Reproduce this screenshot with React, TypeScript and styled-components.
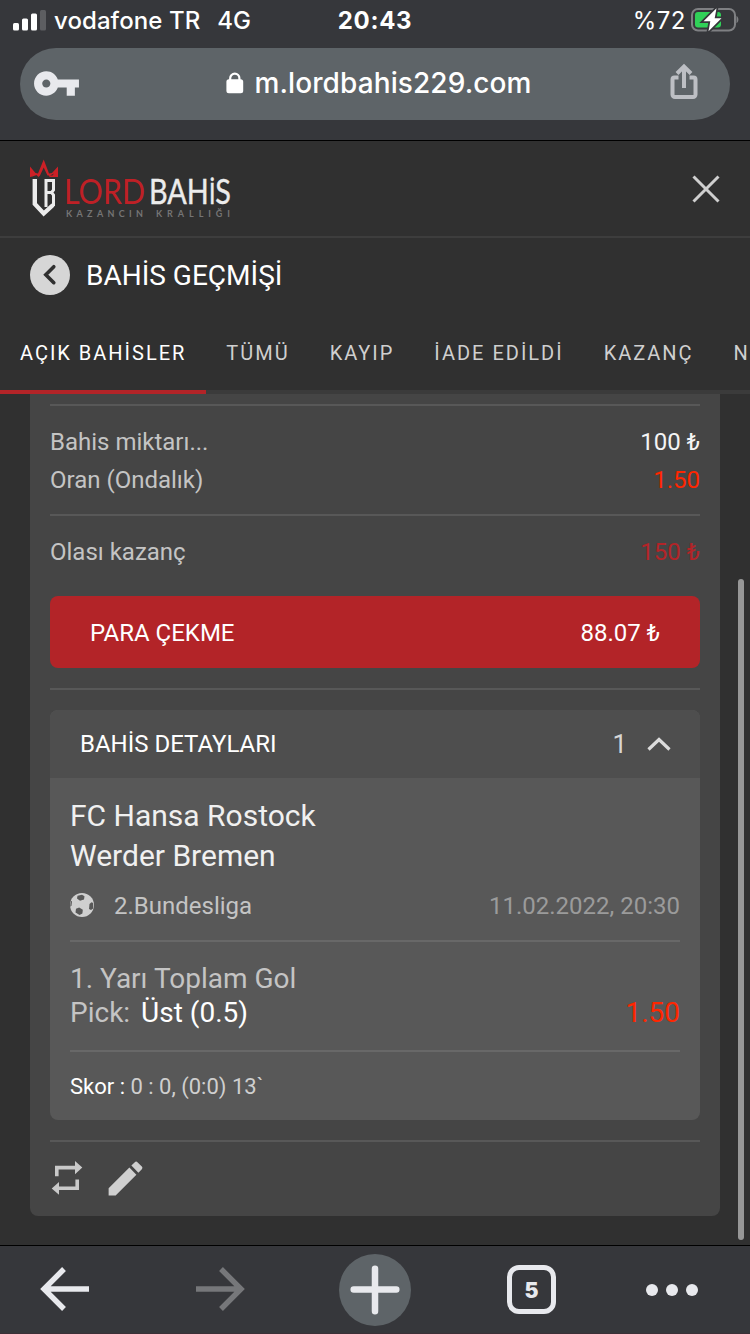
import React from "react";
import styled, { createGlobalStyle, css } from "styled-components";

const Global = createGlobalStyle`
  * { box-sizing: border-box; }
  body { margin: 0; background: #303030; font-family: Roboto, sans-serif; }
  svg { display: block; flex: none; }
`;

const Screen = styled.div`
  position: relative;
  width: 750px;
  height: 1334px;
  overflow: hidden;
  display: flex;
  flex-direction: column;
  background: #303030;
  color: #fff;
  white-space: nowrap;
`;

/* Browser chrome */
const Chrome = styled.header`
  height: 141px;
  flex: none;
  background: #36373b;
  border-bottom: 1px solid #000;
`;
const StatusBar = styled.div`
  height: 48px;
  padding: 0 11px 7px 13px;
  display: grid;
  grid-template-columns: 1fr auto 1fr;
  align-items: center;
  font: 500 24px/41px Inter, sans-serif;
`;
const Carrier = styled.div`
  display: flex;
  align-items: center;
`;
const CarrierName = styled.span`
  margin-left: 7px;
  letter-spacing: 0.08px;
`;
const Network = styled.span`
  margin-left: 17px;
`;
const Clock = styled.span`
  margin-right: 2px;
  font-weight: 700;
  letter-spacing: 0.7px;
`;
const Power = styled.div`
  display: flex;
  align-items: center;
  justify-content: flex-end;
  gap: 5px;
  font-weight: 400;
  letter-spacing: 0.5px;
`;
const AddressBar = styled.div`
  height: 72px;
  margin: 0 20px;
  padding: 0 30px 2px 12px;
  border-radius: 36px;
  background: #5e6468;
  display: grid;
  grid-template-columns: 49px 1fr 31px;
  align-items: center;
`;
const Address = styled.div`
  display: flex;
  align-items: center;
  justify-content: center;
  gap: 10px;
  padding-left: 8px;
  font: 500 28px/40px Inter, sans-serif;
  letter-spacing: 0.1px;
`;

/* Site header */
const SiteHeader = styled.div`
  height: 97px;
  flex: none;
  padding: 0 30px 0 30px;
  display: flex;
  align-items: center;
  justify-content: space-between;
  border-bottom: 2px solid #3d3d3d;
`;
const TitleRow = styled.div`
  height: 74px;
  flex: none;
  padding: 0 30px;
  display: flex;
  align-items: center;
  gap: 16px;
`;
const Title = styled.h1`
  margin: 0;
  padding-top: 2px;
  font: 400 28px/40px Roboto, sans-serif;
`;
const BackButton = styled.button`
  width: 40px;
  height: 40px;
  padding: 0;
  border: 0;
  border-radius: 50%;
  background: #d6d6d6;
`;
const Tabs = styled.nav`
  height: 82px;
  flex: none;
  display: flex;
  background: linear-gradient(#3b3b3b, #3b3b3b) bottom / 100% 4px no-repeat;
`;
const Tab = styled.div<{ $active?: boolean }>`
  flex: none;
  padding: 4px 20px 0;
  font-size: 20px;
  line-height: 74px;
  letter-spacing: 1.99px;
  color: ${(p) => (p.$active ? "#fff" : "#cfcfcf")};
  border-bottom: 4px solid ${(p) => (p.$active ? "#b32428" : "transparent")};
`;

/* Bet card */
const Content = styled.main`
  flex: 1;
  min-height: 0;
  padding: 0 30px;
`;
const Card = styled.section`
  height: 822px;
  padding: 10px 20px 0;
  border-radius: 0 0 8px 8px;
  background: #454545;
`;
const Rule = styled.div<{ $light?: boolean }>`
  height: 2px;
  background: ${(p) => (p.$light ? "#686868" : "#585858")};
`;
const Figures = styled.div<{ $bottom: number }>`
  padding: 17px 0 ${(p) => p.$bottom}px;
`;
const Row = styled.div`
  height: 38px;
  display: flex;
  align-items: center;
  justify-content: space-between;
  font-size: 24px;
  color: #c4c4c4;
`;
type Tone = "white" | "bright" | "dark";
const tones: Record<Tone, string> = { white: "#f4f4f4", bright: "#ff2600", dark: "#b32428" };
const Value = styled.span<{ $tone: Tone }>`
  color: ${(p) => tones[p.$tone]};
`;
const CashOut = styled.button`
  width: 100%;
  height: 72px;
  margin-bottom: 20px;
  padding: 1px 40px 0;
  border: 0;
  border-radius: 8px;
  background: #b32428;
  color: #fff;
  display: flex;
  align-items: center;
  justify-content: space-between;
  font: 400 24px Roboto, sans-serif;
`;
const Details = styled.div`
  margin: 20px 0;
  border-radius: 8px;
  overflow: hidden;
  background: #585858;
`;
const DetailsHead = styled.div`
  height: 68px;
  padding: 0 29px 0 30px;
  display: flex;
  align-items: center;
  justify-content: space-between;
  background: #4e4e4e;
  font-size: 24px;
`;
const Count = styled.div`
  display: flex;
  align-items: center;
  gap: 20px;
  font-size: 26px;
  color: #d6d6d6;
`;
const DetailsBody = styled.div`
  padding: 0 20px;
`;
const Teams = styled.div`
  padding-top: 18px;
  font-size: 30px;
  line-height: 40px;
  color: #f0f0f0;
`;
const League = styled.div`
  height: 64px;
  padding-bottom: 6px;
  display: flex;
  align-items: center;
  font-size: 24px;
  line-height: 30px;
  color: #c4c4c4;
`;
const LeagueName = styled.span`
  margin-left: 20px;
  padding-top: 1px;
  flex: 1;
`;
const Kickoff = styled.span`
  padding-top: 1px;
  color: #9b9b9b;
`;
const Market = styled.div`
  height: 108px;
  padding-top: 20px;
  font-size: 28px;
  line-height: 34px;
  color: #c4c4c4;
`;
const Pick = styled.div`
  display: flex;
  gap: 11px;
`;
const PickName = styled.span`
  flex: 1;
  color: #fff;
`;
const Score = styled.div`
  height: 68px;
  padding-top: 1px;
  font-size: 22px;
  line-height: 68px;
  color: #cfcfcf;
`;
const ScoreLabel = styled.span`
  color: #fff;
`;
const Actions = styled.div`
  height: 72px;
  display: flex;
  align-items: center;
  gap: 18.5px;
`;
const Scrollbar = styled.div`
  position: absolute;
  left: 738px;
  top: 579px;
  width: 6px;
  height: 661px;
  border-radius: 3px;
  background: #979797;
`;

/* Browser toolbar */
const Toolbar = styled.footer`
  height: 89px;
  flex: none;
  display: grid;
  grid-template-columns: 129px 183px 126px 187px 94px;
  align-items: center;
  justify-items: center;
  background: #36373b;
  border-top: 1px solid #000;
  border-bottom: 1px solid #3b2f36;
`;
const toolItem = css`
  display: flex;
  align-items: center;
  justify-content: center;
`;
const NewTab = styled.div`
  ${toolItem}
  width: 72px;
  height: 72px;
  margin-top: 1px;
  border-radius: 50%;
  background: #5e6468;
`;
const TabCount = styled.div`
  ${toolItem}
  width: 49px;
  height: 49px;
  padding-top: 3px;
  border: 5px solid #e8e9ed;
  border-radius: 12px;
  color: #e8e9ed;
  font: 900 21px/24px Inter, sans-serif;
`;

const SignalIcon = () => (
  <svg width="34" height="22" viewBox="0 0 34 22">
    <rect x="0" y="13" width="6" height="7.500" rx="1.5" fill="#fff" />
    <rect x="9" y="8.500" width="6" height="12" rx="1.5" fill="#fff" />
    <rect x="18" y="3.500" width="6" height="17" rx="1.5" fill="#fff" />
    <rect x="27" y="0" width="6" height="20.500" rx="1.5" fill="#5d5e61" />
  </svg>
);
const BatteryIcon = () => (
  <svg width="48" height="26" viewBox="0 0 48 26">
    <rect x="1" y="1" width="43" height="21.500" rx="6" fill="none" stroke="#7f8083" strokeWidth="2" />
    <path d="M45.500 8c2.500 1.200 2.500 6 0 7.200z" fill="#7f8083" />
    <rect x="4" y="4" width="26" height="15.500" rx="3" fill="#30d158" />
    <path d="M25.500 0.300L12.500 13.200h6.800L17.500 23.200 30.500 10.200h-6.800z" fill="#fff" stroke="#36373b" strokeWidth="3.500" paintOrder="stroke" />
  </svg>
);
const KeyIcon = () => (
  <svg width="49" height="49" viewBox="0 0 24 24" fill="#e8e9ed">
    <path d="M12.650 10C11.830 7.670 9.610 6 7 6c-3.310 0-6 2.690-6 6s2.690 6 6 6c2.610 0 4.830-1.670 5.650-4H17v4h4v-4h2v-4H12.650zM7 14c-1.100 0-2-.9-2-2s.9-2 2-2 2 .9 2 2-.9 2-2 2z" />
  </svg>
);
const LockIcon = () => (
  <svg width="18" height="22" viewBox="0 0 18 22">
    <path d="M4.200 9V6.300a4.600 4.600 0 0 1 9.200 0V9" fill="none" stroke="#fff" strokeWidth="2.200" />
    <rect x="0.400" y="7.200" width="16.800" height="14" rx="2.500" fill="#fff" />
  </svg>
);
const ShareIcon = () => (
  <svg width="31" height="40" viewBox="0 0 31 40" fill="none" stroke="#bdbfc4" strokeWidth="4">
    <path d="M9.500 14.500H5.500a2 2 0 0 0-2 2V31.500a2.500 2.500 0 0 0 2.500 2.500H24a2.500 2.500 0 0 0 2.500-2.500V16.500a2 2 0 0 0-2-2h-4" />
    <path d="M15 25V4M8 10.500l7-7 7 7" />
  </svg>
);
const Logo = () => (
  <svg width="202" height="62" viewBox="0 0 202 62">
    <path d="M0 8.500l5.500 6.500 2.500.5L13.700 1.500l5.300 14 3-.5L28 8.500V19h-8.500l-.5-1.500h3.500l1.500-2-4 2h-2.500L13.700 9.500 10 17.500l-1.500 1.500-2-2-4 1.500L0 19z" fill="#cd2026" />
    <g fill="none" stroke="#ececec">
      <path d="M4.800 21V46L13.700 55.500 23 47" strokeWidth="4.400" />
      <path d="M16 49V22.500H23.500V32l-2 2.500 2 2.500V48M16 34.500h6" strokeWidth="3" />
    </g>
    <g fontFamily="Lato, sans-serif" fontSize="35">
      <text x="34" y="46" fill="#bf2026" textLength="81" lengthAdjust="spacingAndGlyphs">LORD</text>
      <text x="119" y="46" fill="#ececec" stroke="#ececec" strokeWidth="0.400" textLength="82" lengthAdjust="spacingAndGlyphs">
        BAH<tspan fontSize="28">İ</tspan>S
      </text>
    </g>
    <g fontFamily="Lato, sans-serif" fontSize="9" fontWeight="700" fill="#757575">
      <text x="36" y="58.500" textLength="77">KAZANCIN</text>
      <text x="126" y="58.500" textLength="74">KRALLIĞI</text>
    </g>
  </svg>
);
const CloseIcon = () => (
  <svg width="28" height="28" viewBox="0 0 28 28" stroke="#cfcfcf" strokeWidth="3">
    <path d="M1.500 1.500l25 25M26.500 1.500l-25 25" />
  </svg>
);
const BackIcon = () => (
  <svg width="40" height="40" viewBox="0 0 40 40" fill="none" stroke="#303030" strokeWidth="3.600" strokeLinecap="round">
    <path d="M23.800 11.700L15.800 19.700l8 8" />
  </svg>
);
const ChevronUp = () => (
  <svg width="24" height="14" viewBox="0 0 24 14" fill="none" stroke="#dcdcdc" strokeWidth="3.200">
    <path d="M1.500 12.500L12 2.500l10.500 10" />
  </svg>
);
const BallIcon = () => (
  <svg width="24" height="24" viewBox="0 0 24 24">
    <clipPath id="ball"><circle cx="12" cy="12" r="12" /></clipPath>
    <circle cx="12" cy="12" r="12" fill="#cfcfcf" />
    <g fill="#585858" clipPath="url(#ball)">
      <path d="M7.500 2.800l4.500-1 2.500 1.500-.5 3.200-4 1.200-3-2.200z" />
      <path d="M6 15.800l3.200-1.200 3.600 2.200-.4 3.700L9.500 22l-4-2.500z" />
      <path d="M19.500 11l2-1.700 1.700.7v5.500l-2.200 1.500-2-1z" />
      <path d="M.6 7.500l1.400 1-.5 4L.2 14z" />
    </g>
  </svg>
);
const RepeatIcon = () => (
  <svg width="34" height="34" viewBox="0 0 34 34" fill="#c9c9c9">
    <path d="M5 4.800H25V0l7.300 6.600L25 13.200V8.400H8.600V15.200H5z" />
    <path d="M29 18.500V29H9v4.800L1.700 27.400 9 21v4.400h16.400V18.500z" />
  </svg>
);
const EditIcon = () => (
  <svg width="45" height="45" viewBox="0 0 24 24" fill="#cfcfcf">
    <path d="M3 17.250V21h3.750L17.810 9.940l-3.750-3.750L3 17.250zM20.710 7.040c.39-.39.39-1.020 0-1.410l-2.340-2.340c-.39-.39-1.020-.39-1.410 0l-1.830 1.830 3.750 3.750 1.830-1.830z" />
  </svg>
);
const ArrowIcon = ({ forward = false }: { forward?: boolean }) => (
  <svg width="49" height="47" viewBox="0 0 49 47" fill="none" stroke={forward ? "#76777a" : "#e8e9ed"} strokeWidth="5.400">
    <path d={forward ? "M0 23H45M25 3L45 23 25 43" : "M49 23H4M24 3L4 23 24 43"} />
  </svg>
);
const PlusIcon = () => (
  <svg width="50" height="50" viewBox="0 0 50 50" stroke="#e8e9ed" strokeWidth="6.500" strokeLinecap="round">
    <path d="M25 3.700V46.300M3.700 24.500H46.300" />
  </svg>
);
const MoreIcon = () => (
  <svg width="52" height="12" viewBox="0 0 52 12" fill="#e8e9ed">
    <circle cx="6" cy="6" r="6" />
    <circle cx="26" cy="6" r="6" />
    <circle cx="46" cy="6" r="6" />
  </svg>
);

const tabs = ["AÇIK BAHİSLER", "TÜMÜ", "KAYIP", "İADE EDİLDİ", "KAZANÇ", "N"];

export default function App() {
  return (
    <>
      <Global />
      <Screen>
        <Chrome>
          <StatusBar>
            <Carrier>
              <SignalIcon />
              <CarrierName>vodafone TR</CarrierName>
              <Network>4G</Network>
            </Carrier>
            <Clock>20:43</Clock>
            <Power>
              <span>%72</span>
              <BatteryIcon />
            </Power>
          </StatusBar>
          <AddressBar>
            <KeyIcon />
            <Address>
              <LockIcon />
              <span>m.lordbahis229.com</span>
            </Address>
            <ShareIcon />
          </AddressBar>
        </Chrome>

        <SiteHeader>
          <Logo />
          <CloseIcon />
        </SiteHeader>
        <TitleRow>
          <BackButton><BackIcon /></BackButton>
          <Title>BAHİS GEÇMİŞİ</Title>
        </TitleRow>
        <Tabs>
          {tabs.map((name, i) => (
            <Tab key={name} $active={i === 0}>{name}</Tab>
          ))}
        </Tabs>

        <Content>
          <Card>
            <Rule />
            <Figures $bottom={15}>
              <Row><span>Bahis miktarı...</span><Value $tone="white">100 ₺</Value></Row>
              <Row><span>Oran (Ondalık)</span><Value $tone="bright">1.50</Value></Row>
            </Figures>
            <Rule />
            <Figures $bottom={25}>
              <Row><span>Olası kazanç</span><Value $tone="dark">150 ₺</Value></Row>
            </Figures>
            <CashOut><span>PARA ÇEKME</span><span>88.07 ₺</span></CashOut>
            <Rule />
            <Details>
              <DetailsHead>
                <span>BAHİS DETAYLARI</span>
                <Count>1<ChevronUp /></Count>
              </DetailsHead>
              <DetailsBody>
                <Teams>
                  <div>FC Hansa Rostock</div>
                  <div>Werder Bremen</div>
                </Teams>
                <League>
                  <BallIcon />
                  <LeagueName>2.Bundesliga</LeagueName>
                  <Kickoff>11.02.2022, 20:30</Kickoff>
                </League>
                <Rule $light />
                <Market>
                  <div>1. Yarı Toplam Gol</div>
                  <Pick>
                    <span>Pick:</span>
                    <PickName>Üst (0.5)</PickName>
                    <Value $tone="bright">1.50</Value>
                  </Pick>
                </Market>
                <Rule $light />
                <Score><ScoreLabel>Skor : </ScoreLabel>0 : 0, (0:0) 13`</Score>
              </DetailsBody>
            </Details>
            <Rule />
            <Actions>
              <RepeatIcon />
              <EditIcon />
            </Actions>
          </Card>
        </Content>

        <Toolbar>
          <ArrowIcon />
          <ArrowIcon forward />
          <NewTab><PlusIcon /></NewTab>
          <TabCount>5</TabCount>
          <MoreIcon />
        </Toolbar>
        <Scrollbar />
      </Screen>
    </>
  );
}
